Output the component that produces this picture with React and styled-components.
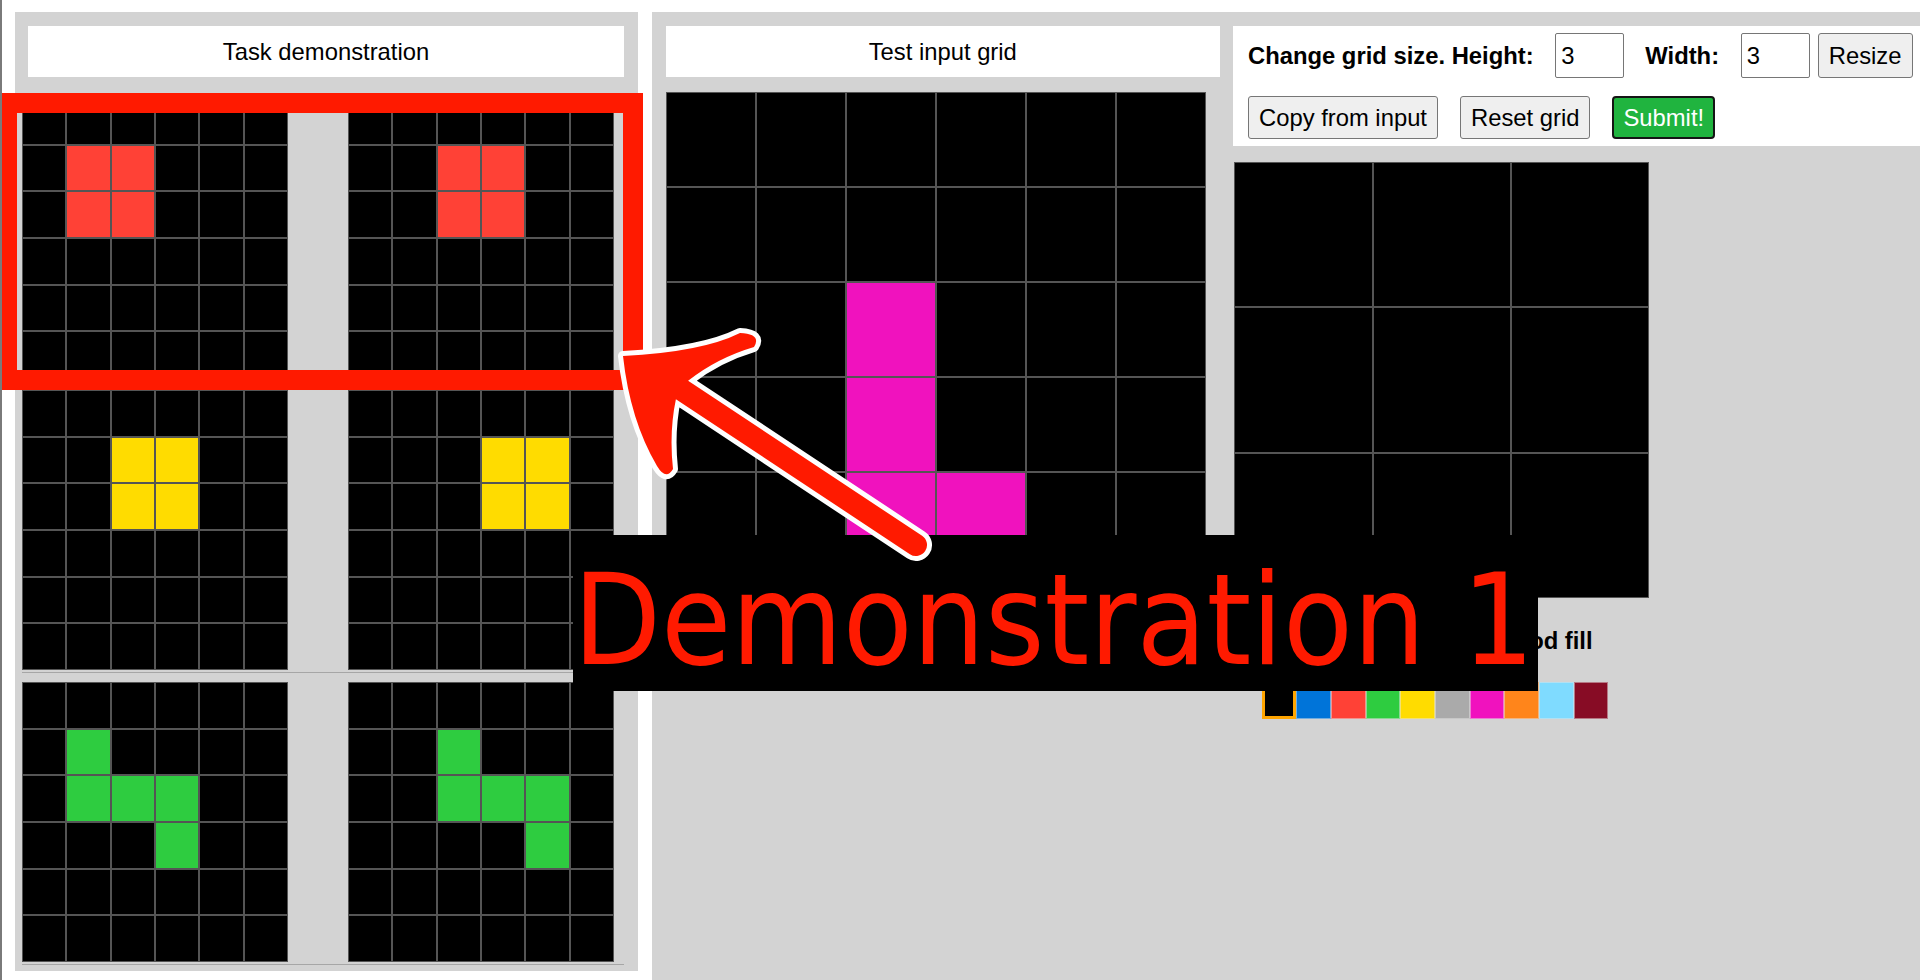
import React from 'react';
import styled, { createGlobalStyle } from 'styled-components';

const PALETTE = ['#000000', '#0074D9', '#FF4136', '#2ECC40', '#FFDC00', '#AAAAAA', '#F012BE', '#FF851B', '#7FDBFF', '#870C25'];
const UI_FONT = `"Liberation Sans", Arial, sans-serif`;
const FS = '23.8px';
const PANEL = '#d3d3d3';
const ANNOT_RED = '#ff1a00';

const GlobalStyle = createGlobalStyle`
  html, body {
    margin: 0;
    padding: 0;
    background: #ffffff;
    overflow: hidden;
  }
  body {
    width: 1920px;
    height: 980px;
    box-sizing: border-box;
    border-left: 2px solid #7a7a7a;
    font-family: ${UI_FONT};
    color: #000;
  }
`;

const Page = styled.div`
  position: relative;
  width: 1918px;
  height: 980px;
  overflow: hidden;
`;

const Workspace = styled.div`
  display: flex;
  align-items: flex-start;
  gap: 14px;
  padding: 12px 0 0 13px;
`;

const DemoPanel = styled.section`
  flex: none;
  width: 623px;
  box-sizing: border-box;
  background: ${PANEL};
  padding: 14px 14px 6px 7px;
`;

const TitleBox = styled.div`
  height: 51px;
  line-height: 51px;
  background: #fff;
  text-align: center;
  font-size: ${FS};
  margin-left: ${(p) => p.$indent || 0}px;
  margin-bottom: ${(p) => p.$after || 0}px;
`;

const PairRow = styled.div`
  display: flex;
  gap: 60px;
  padding-bottom: 2px;
  border-bottom: 1px solid #a6a6a6;
  & + & {
    margin-top: 9px;
  }
`;

const Board = styled.div`
  flex: none;
  display: grid;
  grid-template-columns: repeat(${(p) => p.$cols}, 1fr);
  grid-template-rows: repeat(${(p) => p.$rows}, 1fr);
  gap: 2px;
  padding: 1px;
  box-sizing: border-box;
  width: ${(p) => p.$w}px;
  height: ${(p) => p.$h}px;
  background: #555;
  margin: ${(p) => p.$margin || '0'};
`;

const Cell = styled.div`
  background: ${(p) => PALETTE[p.$c]};
`;

const EvalPanel = styled.section`
  flex: none;
  width: 1288px;
  height: 968px;
  box-sizing: border-box;
  background: ${PANEL};
  padding: 14px 0 0 13.5px;
  display: flex;
  align-items: flex-start;
`;

const InputView = styled.div`
  flex: none;
  width: 554.5px;
  display: flex;
  flex-direction: column;
`;

const Editor = styled.div`
  flex: 1;
  margin-left: 13px;
  display: flex;
  flex-direction: column;
  align-items: flex-start;
`;

const Controls = styled.div`
  align-self: stretch;
  background: #fff;
  padding: 7px 15px 7.7px;
  display: flex;
  flex-direction: column;
  gap: 18.4px;
`;

const ControlRow = styled.div`
  display: flex;
  align-items: center;
`;

const BoldLabel = styled.label`
  font-weight: bold;
  font-size: ${FS};
  margin-left: ${(p) => p.$ml || 0}px;
  white-space: nowrap;
`;

const SizeField = styled.input`
  width: 69px;
  height: 45px;
  box-sizing: border-box;
  margin: 0 0 0 ${(p) => p.$ml || 0}px;
  padding: 0 5px;
  border: 1px solid #767676;
  border-radius: 2px;
  font-family: ${UI_FONT};
  font-size: ${FS};
  color: #000;
  background: #fff;
`;

const Button = styled.button`
  height: ${(p) => p.$h || 42.3}px;
  box-sizing: border-box;
  margin: 0 0 0 ${(p) => p.$ml || 0}px;
  padding: 0 10px;
  border: 1px solid #767676;
  border-radius: 3px;
  background: #efefef;
  color: #000;
  font-family: ${UI_FONT};
  font-size: ${FS};
  white-space: nowrap;
`;

const SubmitButton = styled(Button)`
  padding: 0 9px;
  border: 2px solid #151515;
  border-radius: 4px;
  background: #20b43f;
  color: #fff;
`;

const Toolbar = styled.div`
  display: flex;
  align-items: center;
  height: 27px;
  margin-top: 28.9px;
  padding-left: 47.4px;
  font-weight: bold;
  font-size: ${FS};
  line-height: 27px;
`;

const Radio = styled.input`
  width: 16px;
  height: 16px;
  margin: 0 6px 0 ${(p) => p.$ml || 0}px;
`;

const ToolLabel = styled.label`
  white-space: nowrap;
`;

const SymbolPicker = styled.div`
  display: flex;
  margin: 28.5px 0 0 28.7px;
`;

const Swatch = styled.div`
  width: 34.67px;
  height: 36.3px;
  box-sizing: border-box;
  background: ${(p) => PALETTE[p.$c]};
  border: ${(p) => (p.$selected ? '3px solid #ffa500' : '1px solid rgba(230,230,230,0.5)')};
`;

/* ---- annotation overlay (lies over the page) ---- */
const Annotation = styled.div`
  position: absolute;
  inset: 0;
  pointer-events: none;
`;

const RedFrame = styled.div`
  position: absolute;
  left: -5px;
  top: 93px;
  width: 645.7px;
  height: 297px;
  box-sizing: border-box;
  border: 20px solid ${ANNOT_RED};
`;

const LabelBox = styled.div`
  position: absolute;
  left: 571px;
  top: 535px;
  width: 965px;
  height: 156px;
  background: #000;
`;

const LabelText = styled.span`
  display: inline-block;
  transform: scaleX(0.9);
  transform-origin: 0 0;
  font-family: "DejaVu Sans", Verdana, sans-serif;
  font-size: 127px;
  line-height: 170px;
  color: ${ANNOT_RED};
  white-space: nowrap;
`;

const ArrowLayer = styled.svg`
  position: absolute;
  left: 0;
  top: 0;
  width: 1920px;
  height: 980px;
  overflow: visible;
`;

function makeGrid(rows, cols, points = [], color = 0) {
  const g = Array.from({ length: rows }, () => Array(cols).fill(0));
  points.forEach(([r, c]) => {
    g[r][c] = color;
  });
  return g;
}

function Grid({ data, w, h, margin }) {
  const rows = data.length;
  const cols = data[0].length;
  return (
    <Board $rows={rows} $cols={cols} $w={w} $h={h} $margin={margin}>
      {data.flat().map((c, i) => (
        <Cell key={i} $c={c} />
      ))}
    </Board>
  );
}

const PAIRS = [
  {
    input: makeGrid(6, 6, [[1, 1], [1, 2], [2, 1], [2, 2]], 2),
    output: makeGrid(6, 6, [[1, 2], [1, 3], [2, 2], [2, 3]], 2),
  },
  {
    input: makeGrid(6, 6, [[1, 2], [1, 3], [2, 2], [2, 3]], 4),
    output: makeGrid(6, 6, [[1, 3], [1, 4], [2, 3], [2, 4]], 4),
  },
  {
    input: makeGrid(6, 6, [[1, 1], [2, 1], [2, 2], [2, 3], [3, 3]], 3),
    output: makeGrid(6, 6, [[1, 2], [2, 2], [2, 3], [2, 4], [3, 4]], 3),
  },
];

const TEST_INPUT = makeGrid(6, 6, [[2, 2], [3, 2], [4, 2], [4, 3]], 6);
const OUTPUT = makeGrid(3, 3);

const ARROW_PATH =
  'M621 356 Q700 352 738 333 Q760 334 752 347 Q715 358 686.1 380.8 ' +
  'L920.1 535.8 A11 11 0 0 1 907.9 554.2 L673.9 399.2 ' +
  'Q667 432 671 469 Q664 481 655 466 Q628 420 621 356 Z';

export default function App() {
  return (
    <>
      <GlobalStyle />
      <Page>
        <Workspace>
          <DemoPanel>
            <TitleBox $indent={6} $after={21}>Task demonstration</TitleBox>
            {PAIRS.map((p, i) => (
              <PairRow key={i}>
                <Grid data={p.input} w={266} h={280} />
                <Grid data={p.output} w={266} h={280} />
              </PairRow>
            ))}
          </DemoPanel>

          <EvalPanel>
            <InputView>
              <TitleBox>Test input grid</TitleBox>
              <Grid data={TEST_INPUT} w={540} h={570} margin="14.7px 0 0 0" />
            </InputView>

            <Editor>
              <Controls>
                <ControlRow>
                  <BoldLabel htmlFor="out_h">Change grid size. Height:</BoldLabel>
                  <SizeField id="out_h" $ml={21.7} defaultValue="3" />
                  <BoldLabel htmlFor="out_w" $ml={21}>Width:</BoldLabel>
                  <SizeField id="out_w" $ml={21.7} defaultValue="3" />
                  <Button $ml={8} $h={45}>Resize</Button>
                </ControlRow>
                <ControlRow>
                  <Button>Copy from input</Button>
                  <Button $ml={22}>Reset grid</Button>
                  <SubmitButton $ml={22}>Submit!</SubmitButton>
                </ControlRow>
              </Controls>

              <Grid data={OUTPUT} w={415} h={436} margin="15.6px 0 0 1.3px" />

              <Toolbar>
                <Radio type="radio" name="tool" id="tool_edit" />
                <ToolLabel htmlFor="tool_edit">Edit</ToolLabel>
                <Radio type="radio" name="tool" id="tool_select" $ml={16} />
                <ToolLabel htmlFor="tool_select">Select</ToolLabel>
                <Radio type="radio" name="tool" id="tool_fill" $ml={16} defaultChecked />
                <ToolLabel htmlFor="tool_fill">Flood fill</ToolLabel>
              </Toolbar>

              <SymbolPicker>
                {PALETTE.map((_, i) => (
                  <Swatch key={i} $c={i} $selected={i === 0} />
                ))}
              </SymbolPicker>
            </Editor>
          </EvalPanel>
        </Workspace>

        <Annotation>
          <RedFrame />
          <LabelBox>
            <LabelText>Demonstration 1</LabelText>
          </LabelBox>
          <ArrowLayer viewBox="0 0 1920 980">
            <path
              d={ARROW_PATH}
              fill={ANNOT_RED}
              stroke="#ffffff"
              strokeWidth="10"
              strokeLinejoin="round"
              paintOrder="stroke"
            />
          </ArrowLayer>
        </Annotation>
      </Page>
    </>
  );
}
